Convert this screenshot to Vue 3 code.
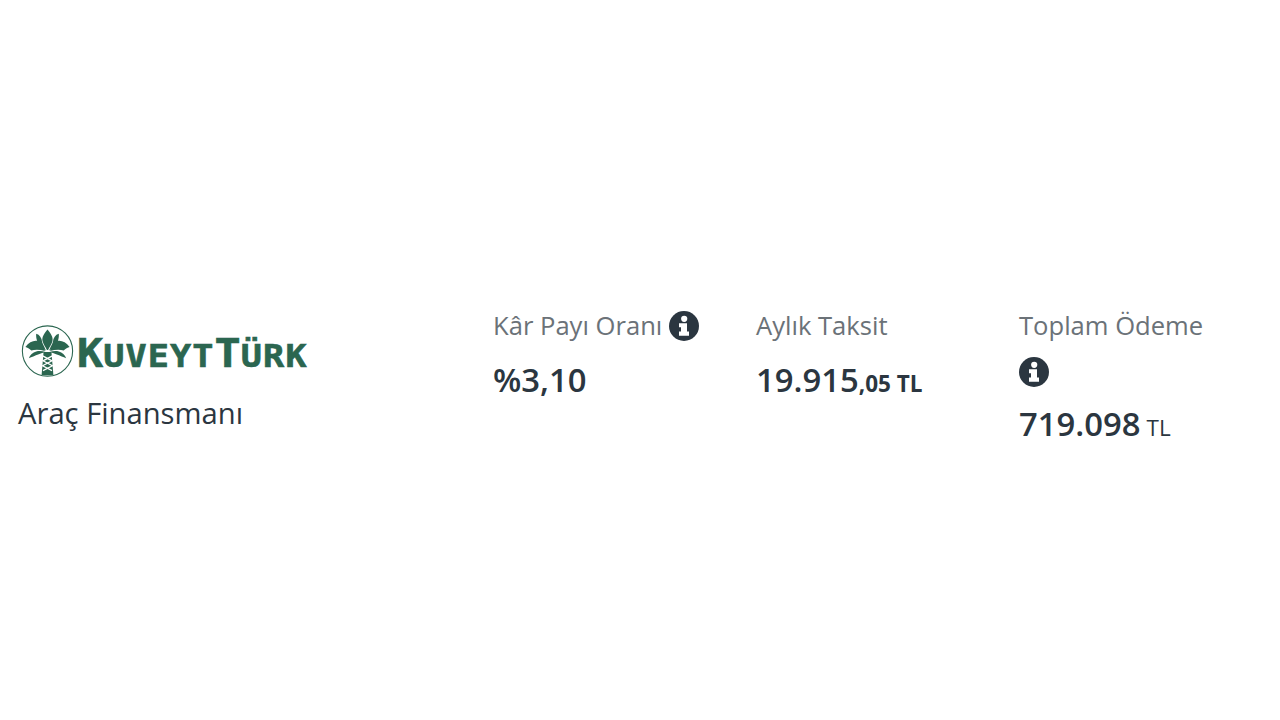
<script setup>
const stats = [
  { label: 'Kâr Payı Oranı', main: '%3,10', unit: '', info: true, cls: '' },
  { label: 'Aylık Taksit', main: '19.915', unit: ',05 TL', info: false, cls: 'bold-unit' },
  { label: 'Toplam Ödeme', main: '719.098', unit: 'TL', info: true, cls: 'light-unit wrapped' }
]
</script>

<template>
  <main class="page">
    <section class="offer">
      <div class="brand">
        <div class="logo">
          <svg class="palm" viewBox="0 0 54 54" width="53" height="54" aria-hidden="true">
            <circle cx="27" cy="27" r="25.6" fill="#fff" stroke="#2b6650" stroke-width="1.1" />
            <g fill="#2b6650">
              <path d="M27 5 C30.5 9 33 13 32 17 C31.2 20 29 23 27.6 26 H26.4 C25 23 22.8 20 22 17 C21 13 23.5 9 27 5Z" />
              <path d="M15.5 9.5 C19 10.5 21 13.5 21.6 18 C22.6 21 24.6 24 25.4 26.5 C21 24.5 17.5 20.5 16.2 16 C15.5 14 15.3 11.5 15.5 9.5Z" />
              <path d="M38.5 9.5 C35 10.5 33 13.5 32.4 18 C31.4 21 29.4 24 28.6 26.5 C33 24.5 36.5 20.5 37.8 16 C38.5 14 38.7 11.5 38.5 9.5Z" />
              <path d="M4.5 23 C8 18 13 15.8 17 16.8 C20 19.5 22.5 23 24.5 27 C19.5 25.5 14 25.5 10.5 26.5 C8.5 24.8 6.5 23.6 4.5 23Z" />
              <path d="M49.5 23 C46 18 41 15.8 37 16.8 C34 19.5 31.5 23 29.5 27 C34.5 25.5 40 25.5 43.5 26.5 C45.5 24.8 47.5 23.6 49.5 23Z" />
              <path d="M8 34.5 C9 31 12 28.3 15.5 27.4 C18.5 26.8 22 27 25 28 C20 29.5 16 31 12.5 32.5 C11 33 9.5 33.6 8 34.5Z" />
              <path d="M46 34.5 C45 31 42 28.3 38.5 27.4 C35.5 26.8 32 27 29 28 C34 29.5 38 31 41.5 32.5 C43 33 44.5 33.6 46 34.5Z" />
              <path d="M23 28 H31 L33 51.5 H21Z" />
            </g>
            <g fill="none" stroke="#fff" stroke-width="1.3">
              <path d="M22 32 L31.6 37 L22 42 L31.6 47" />
              <path d="M32 32 L22.4 37 L32 42 L22.4 47" />
            </g>
          </svg>
          <span class="wordmark"><span class="big">K</span>UVEYT<span class="big">T</span>ÜRK</span>
        </div>
        <h1 class="product">Araç Finansmanı</h1>
      </div>

      <div class="stats">
        <div v-for="s in stats" :key="s.label" class="stat" :class="s.cls">
          <div class="label">
            {{ s.label }}
            <svg v-if="s.info" class="info" viewBox="0 0 30 30" width="30" height="30" aria-hidden="true">
              <circle cx="15" cy="15" r="15" fill="#2b3640" />
              <circle cx="15.2" cy="7.8" r="3.1" fill="#fff" />
              <path d="M10 12.2 H18 V20.6 H20 V24.8 H10 V20.6 H12 V16.2 H10Z" fill="#fff" />
            </svg>
          </div>
          <div class="value">{{ s.main }}<span class="unit">{{ s.unit }}</span></div>
        </div>
      </div>
    </section>
  </main>
</template>

<style>
html, body { margin: 0; background: #fff; }
</style>

<style scoped>
.page {
  height: 720px;
  display: flex;
  align-items: center;
  font-family: "Open Sans", "Noto Sans", sans-serif;
  color: #2b3640;
}
.offer {
  width: 100%;
  display: flex;
  align-items: flex-start;
}
.brand {
  width: 493px;
  flex: none;
  padding: 53px 0 0 18px;
  box-sizing: border-box;
}
.logo {
  display: flex;
  align-items: center;
  gap: 3px;
  margin-left: 3px;
  height: 54px;
}
.palm { flex: none; }
.wordmark {
  display: inline-block;
  padding-top: 8px;
  font-family: "DejaVu Sans Mono", monospace;
  font-weight: 700;
  font-size: 31.5px;
  line-height: 54px;
  color: #2b6650;
  letter-spacing: 1px;
  -webkit-text-stroke: 0.6px #2b6650;
  white-space: nowrap;
  transform: scaleX(1.116);
  transform-origin: left center;
}
.big { font-size: 39px; letter-spacing: 0; }
.product {
  margin: 16px 0 0;
  font-size: 29.2px;
  line-height: 38px;
  font-weight: 400;
}
.stats {
  flex: 1;
  display: grid;
  grid-template-columns: repeat(3, 263px);
  padding-top: 32px;
}
.stat { min-width: 0; }
.label {
  width: 215px;
  font-size: 25.6px;
  line-height: 46px;
  color: #6b7278;
}
.info { vertical-align: -6px; }
.value {
  font-size: 32.8px;
  line-height: 44px;
  font-weight: 600;
  margin-top: 9px;
}
.wrapped .value { margin-top: 7px; }
.unit { font-size: 22.5px; font-weight: 400; margin-left: 6px; }
.bold-unit .unit { font-weight: 700; margin-left: 0; }
</style>
